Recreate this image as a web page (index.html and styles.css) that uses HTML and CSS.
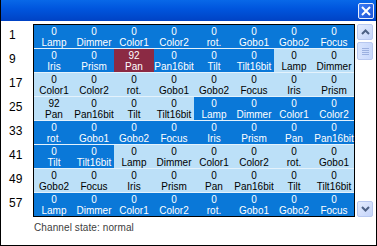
FILE: index.html
```html
<!DOCTYPE html>
<html lang="en">
<head>
  <meta charset="UTF-8" />
  <title>Channel monitor</title>
  <link rel="stylesheet" href="styles.css">
</head>
<body>
  <div class="window">
    <div class="titlebar">
      <button class="close" aria-label="Close">
        <svg width="10" height="10" viewBox="0 0 10 10"><path d="M1 1L9 9M9 1L1 9" stroke="#fff" stroke-width="2"/></svg>
      </button>
    </div>
    <div class="content">
      <div class="labels">
        <div class="label">1</div>
        <div class="label">9</div>
        <div class="label">17</div>
        <div class="label">25</div>
        <div class="label">33</div>
        <div class="label">41</div>
        <div class="label">49</div>
        <div class="label">57</div>
      </div>
      <div class="grid">
        <div class="row">
          <div class="cell dark">0<br>Lamp</div><div class="cell dark">0<br>Dimmer</div><div class="cell dark">0<br>Color1</div><div class="cell dark">0<br>Color2</div>
          <div class="cell dark">0<br>rot.</div><div class="cell dark">0<br>Gobo1</div><div class="cell dark">0<br>Gobo2</div><div class="cell dark">0<br>Focus</div>
        </div>
        <div class="row">
          <div class="cell dark">0<br>Iris</div><div class="cell dark">0<br>Prism</div><div class="cell active">92<br>Pan</div><div class="cell dark">0<br>Pan16bit</div>
          <div class="cell dark">0<br>Tilt</div><div class="cell dark">0<br>Tilt16bit</div><div class="cell light">0<br>Lamp</div><div class="cell light">0<br>Dimmer</div>
        </div>
        <div class="row">
          <div class="cell light">0<br>Color1</div><div class="cell light">0<br>Color2</div><div class="cell light">0<br>rot.</div><div class="cell light">0<br>Gobo1</div>
          <div class="cell light">0<br>Gobo2</div><div class="cell light">0<br>Focus</div><div class="cell light">0<br>Iris</div><div class="cell light">0<br>Prism</div>
        </div>
        <div class="row">
          <div class="cell light">92<br>Pan</div><div class="cell light">0<br>Pan16bit</div><div class="cell light">0<br>Tilt</div><div class="cell light">0<br>Tilt16bit</div>
          <div class="cell dark">0<br>Lamp</div><div class="cell dark">0<br>Dimmer</div><div class="cell dark">0<br>Color1</div><div class="cell dark">0<br>Color2</div>
        </div>
        <div class="row">
          <div class="cell dark">0<br>rot.</div><div class="cell dark">0<br>Gobo1</div><div class="cell dark">0<br>Gobo2</div><div class="cell dark">0<br>Focus</div>
          <div class="cell dark">0<br>Iris</div><div class="cell dark">0<br>Prism</div><div class="cell dark">0<br>Pan</div><div class="cell dark">0<br>Pan16bit</div>
        </div>
        <div class="row">
          <div class="cell dark">0<br>Tilt</div><div class="cell dark">0<br>Tilt16bit</div><div class="cell light">0<br>Lamp</div><div class="cell light">0<br>Dimmer</div>
          <div class="cell light">0<br>Color1</div><div class="cell light">0<br>Color2</div><div class="cell light">0<br>rot.</div><div class="cell light">0<br>Gobo1</div>
        </div>
        <div class="row">
          <div class="cell light">0<br>Gobo2</div><div class="cell light">0<br>Focus</div><div class="cell light">0<br>Iris</div><div class="cell light">0<br>Prism</div>
          <div class="cell light">0<br>Pan</div><div class="cell light">0<br>Pan16bit</div><div class="cell light">0<br>Tilt</div><div class="cell light">0<br>Tilt16bit</div>
        </div>
        <div class="row">
          <div class="cell dark">0<br>Lamp</div><div class="cell dark">0<br>Dimmer</div><div class="cell dark">0<br>Color1</div><div class="cell dark">0<br>Color2</div>
          <div class="cell dark">0<br>rot.</div><div class="cell dark">0<br>Gobo1</div><div class="cell dark">0<br>Gobo2</div><div class="cell dark">0<br>Focus</div>
        </div>
      </div>
      <div class="scrollbar">
        <div class="sb-btn">
          <svg width="9" height="6" viewBox="0 0 9 6"><path d="M1 5L4.5 1.5L8 5" fill="none" stroke="#4d6185" stroke-width="2"/></svg>
        </div>
        <div class="sb-thumb">
          <span></span><span></span><span></span><span></span>
        </div>
        <div class="sb-track"></div>
        <div class="sb-btn">
          <svg width="9" height="6" viewBox="0 0 9 6"><path d="M1 1L4.5 4.5L8 1" fill="none" stroke="#4d6185" stroke-width="2"/></svg>
        </div>
      </div>
    </div>
    <div class="status">Channel state: normal</div>
  </div>
</body>
</html>
```

FILE: styles.css
```css
body {
  margin: 0;
  font-family: "Liberation Sans", Arial, sans-serif;
}
.window {
  width: 377px;
  height: 246px;
  box-sizing: border-box;
  border: 1px solid #000;
  border-top: none;
  background: #fff;
}
.titlebar {
  height: 21px;
  background: linear-gradient(#0868e8, #0056de 40%, #0042c4);
  display: flex;
  justify-content: flex-end;
  align-items: center;
  padding-right: 2px;
}
.close {
  width: 16px;
  height: 16px;
  padding: 0;
  border: 1px solid #e8eefc;
  border-radius: 2px;
  background: linear-gradient(135deg, #3c7cf4, #1c54d8);
  display: flex;
  align-items: center;
  justify-content: center;
}
.content {
  display: flex;
  margin-top: 3px;
}
.labels {
  width: 32px;
}
.label {
  height: 24px;
  box-sizing: border-box;
  padding: 4px 0 0 8px;
  font-size: 12px;
  line-height: 14px;
  color: #000;
}
.grid {
  width: 320px;
  border: 1px solid #000;
  background: #e4f2fc;
  display: flex;
  flex-direction: column;
  gap: 1px;
}
.row {
  display: flex;
  height: 23px;
}
.cell {
  width: 40px;
  text-align: center;
  font-size: 10px;
  line-height: 11px;
  padding-top: 1px;
  white-space: nowrap;
}
.dark {
  background: #0a78d8;
  color: #fff;
}
.light {
  background: #bce0f8;
  color: #000;
}
.active {
  background: #8b2a44;
  color: #fff;
}
.scrollbar {
  width: 16px;
  margin-left: 2px;
  display: flex;
  flex-direction: column;
}
.sb-btn {
  height: 16px;
  box-sizing: border-box;
  border: 1px solid #b8c8f0;
  border-radius: 2px;
  background: linear-gradient(135deg, #e4ecfe, #c4d4fa);
  display: flex;
  align-items: center;
  justify-content: center;
}
.sb-thumb {
  height: 18px;
  margin-top: 2px;
  box-sizing: border-box;
  border: 1px solid #b8c8f0;
  border-radius: 2px;
  background: linear-gradient(90deg, #d8e4fe, #c8d8fc);
  display: flex;
  flex-direction: column;
  align-items: center;
  justify-content: center;
  gap: 1px;
}
.sb-thumb span {
  width: 7px;
  height: 1px;
  background: #9cb0e0;
}
.sb-track {
  flex: 1;
}
.status {
  padding: 5px 0 0 33px;
  font-size: 10px;
  letter-spacing: 0.1px;
  color: #404040;
}
```
